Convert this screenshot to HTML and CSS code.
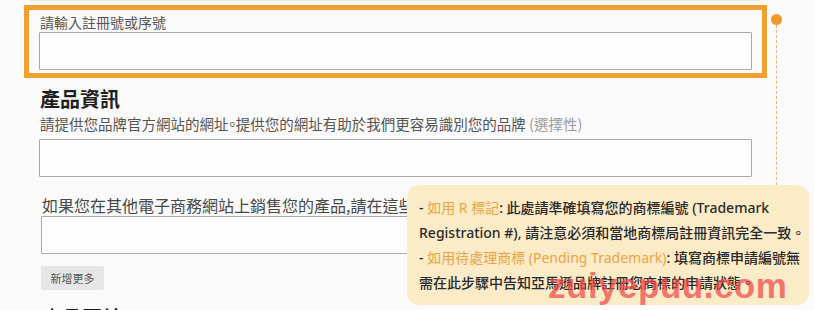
FILE: index.html
```html
<!DOCTYPE html>
<html lang="zh-Hant">
<head>
<meta charset="utf-8">
<title>品牌註冊</title>
<link rel="stylesheet" href="styles.css">
</head>
<body>
<div class="page">
  <div class="topline"></div>
  <div class="highlight">
    <label class="field-label">請輸入註冊號或序號</label>
    <div class="input"></div>
  </div>
  <section class="section">
    <h2 class="heading">產品資訊</h2>
    <p class="desc">請提供您品牌官方網站的網址<span class="half">。</span>提供您的網址有助於我們更容易識別您的品牌 <span class="optional">(選擇性)</span></p>
    <div class="input"></div>
    <p class="desc2">如果您在其他電子商務網站上銷售您的產品,請在這些網站上提供您的產品網址</p>
    <div class="input input-alt"></div>
    <button class="add-btn">新增更多</button>
    <h2 class="heading heading-next">產品圖片</h2>
  </section>

  <div class="marker-dot"></div>
  <div class="marker-line"></div>

  <div class="tip">
    <p>- <span class="hl">如用 R 標記</span>: 此處請準確填寫您的商標編號 (Trademark<br>Registration #), 請注意必須和當地商標局註冊資訊完全一致。</p>
    <p>- <span class="hl">如用待處理商標 (Pending Trademark)</span>: 填寫商標申請編號無<br>需在此步驟中告知亞馬遜品牌註冊您商標的申請狀態。</p>
  </div>

  <div class="watermark">zuiyepuu.com</div>
</div>
</body>
</html>
```

FILE: styles.css
```css
* { box-sizing: border-box; }

html, body {
  margin: 0;
  padding: 0;
  background: #fafafa;
}

body {
  font-family: "Noto Sans CJK TC", "Noto Sans", sans-serif;
  color: #333;
  width: 815px;
  height: 310px;
  overflow: hidden;
}

.page {
  position: relative;
  width: 815px;
  height: 310px;
  overflow: hidden;
}

.topline {
  height: 1px;
  margin: 0 55px 0 30px;
  background: #e6e6e6;
}

.highlight {
  margin: 4px 48px 0 24px;
  border: 5px solid #f0a02e;
  padding: 2px 10px 3px 10px;
}

.field-label {
  display: block;
  font-size: 14px;
  line-height: 20px;
  color: #555;
  padding-left: 1px;
}

.input {
  height: 38px;
  border: 1px solid #a9a9a9;
  background: #fdfdfd;
  border-radius: 1px;
}

.section {
  padding: 0 63px 0 39px;
}

.heading {
  margin: 7px 0 0 1px;
  font-size: 20px;
  line-height: 28px;
  font-weight: 700;
  color: #1f1f1f;
}

.desc {
  margin: 0 0 4px 1px;
  font-size: 14.5px;
  line-height: 22px;
  color: #555;
  white-space: nowrap;
}

.half {
  font-feature-settings: "halt";
}

.optional {
  color: #9a9a9a;
}

.desc2 {
  margin: 17px 0 0 3px;
  font-size: 16px;
  line-height: 22px;
  color: #484848;
  white-space: nowrap;
  overflow: hidden;
}

.input-alt {
  margin-left: 2px;
}

.add-btn {
  display: block;
  margin: 12px 0 0 2px;
  width: 63px;
  height: 24px;
  border: none;
  border-radius: 2px;
  background: #e6e6e6;
  font-family: "Noto Sans CJK TC", sans-serif;
  font-size: 11px;
  color: #555;
  padding: 0;
}

.heading-next {
  margin-top: 14px;
  margin-left: 3px;
}

.marker-dot {
  position: absolute;
  left: 771px;
  top: 14px;
  width: 11px;
  height: 11px;
  border-radius: 50%;
  background: #f0982a;
}

.marker-line {
  position: absolute;
  left: 776px;
  top: 25px;
  height: 160px;
  border-left: 1px dashed #e3b478;
}

.tip {
  position: absolute;
  left: 407px;
  top: 185px;
  width: 402px;
  height: 120px;
  border-radius: 12px;
  background: #fcebc7;
  padding: 10px 8px 0 12px;
  font-family: "Noto Sans", "Noto Sans CJK TC", sans-serif;
  font-size: 14px;
  line-height: 25px;
  font-weight: 500;
  color: #2a2a2a;
  white-space: nowrap;
}

.tip p {
  margin: 0;
}

.hl {
  color: #eba445;
  font-weight: 400;
}

.watermark {
  position: absolute;
  left: 548px;
  top: 268px;
  font-family: "Liberation Sans", Arial, sans-serif;
  font-weight: 700;
  font-size: 35px;
  line-height: 35px;
  letter-spacing: 0.5px;
  color: rgba(238, 72, 72, 0.72);
  pointer-events: none;
}
```
